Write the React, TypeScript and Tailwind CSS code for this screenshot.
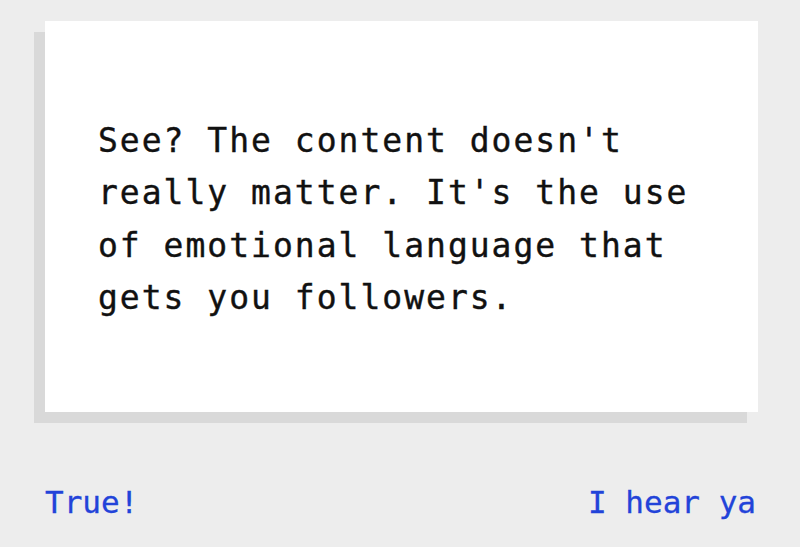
export default function App() {
  return (
    <div className="h-[547px] w-full bg-[#ededed] font-['DejaVu_Sans_Mono',monospace]">
      <div className="pl-[45px] pr-[42px] pt-[21px]">
        <div className="flex h-[391px] items-center bg-white pl-[53px] pt-[6px] shadow-[-11px_11px_0_0_#d9d9d9]">
          <p className="w-[620px] text-[33px] leading-[52.5px] tracking-[2px] text-[#111] [-webkit-text-stroke:0.4px_#111]">
            See? The content doesn't really matter. It's the use of emotional language that gets you followers.
          </p>
        </div>
      </div>
      <div className="mt-[71px] flex items-center justify-between pl-[45px] pr-[44px]">
        <button className="text-[31px] leading-[38px] text-[#2243d9] [-webkit-text-stroke:0.3px_#2243d9]">True!</button>
        <button className="text-[31px] leading-[38px] text-[#2243d9] [-webkit-text-stroke:0.3px_#2243d9]">I hear ya</button>
      </div>
    </div>
  );
}
